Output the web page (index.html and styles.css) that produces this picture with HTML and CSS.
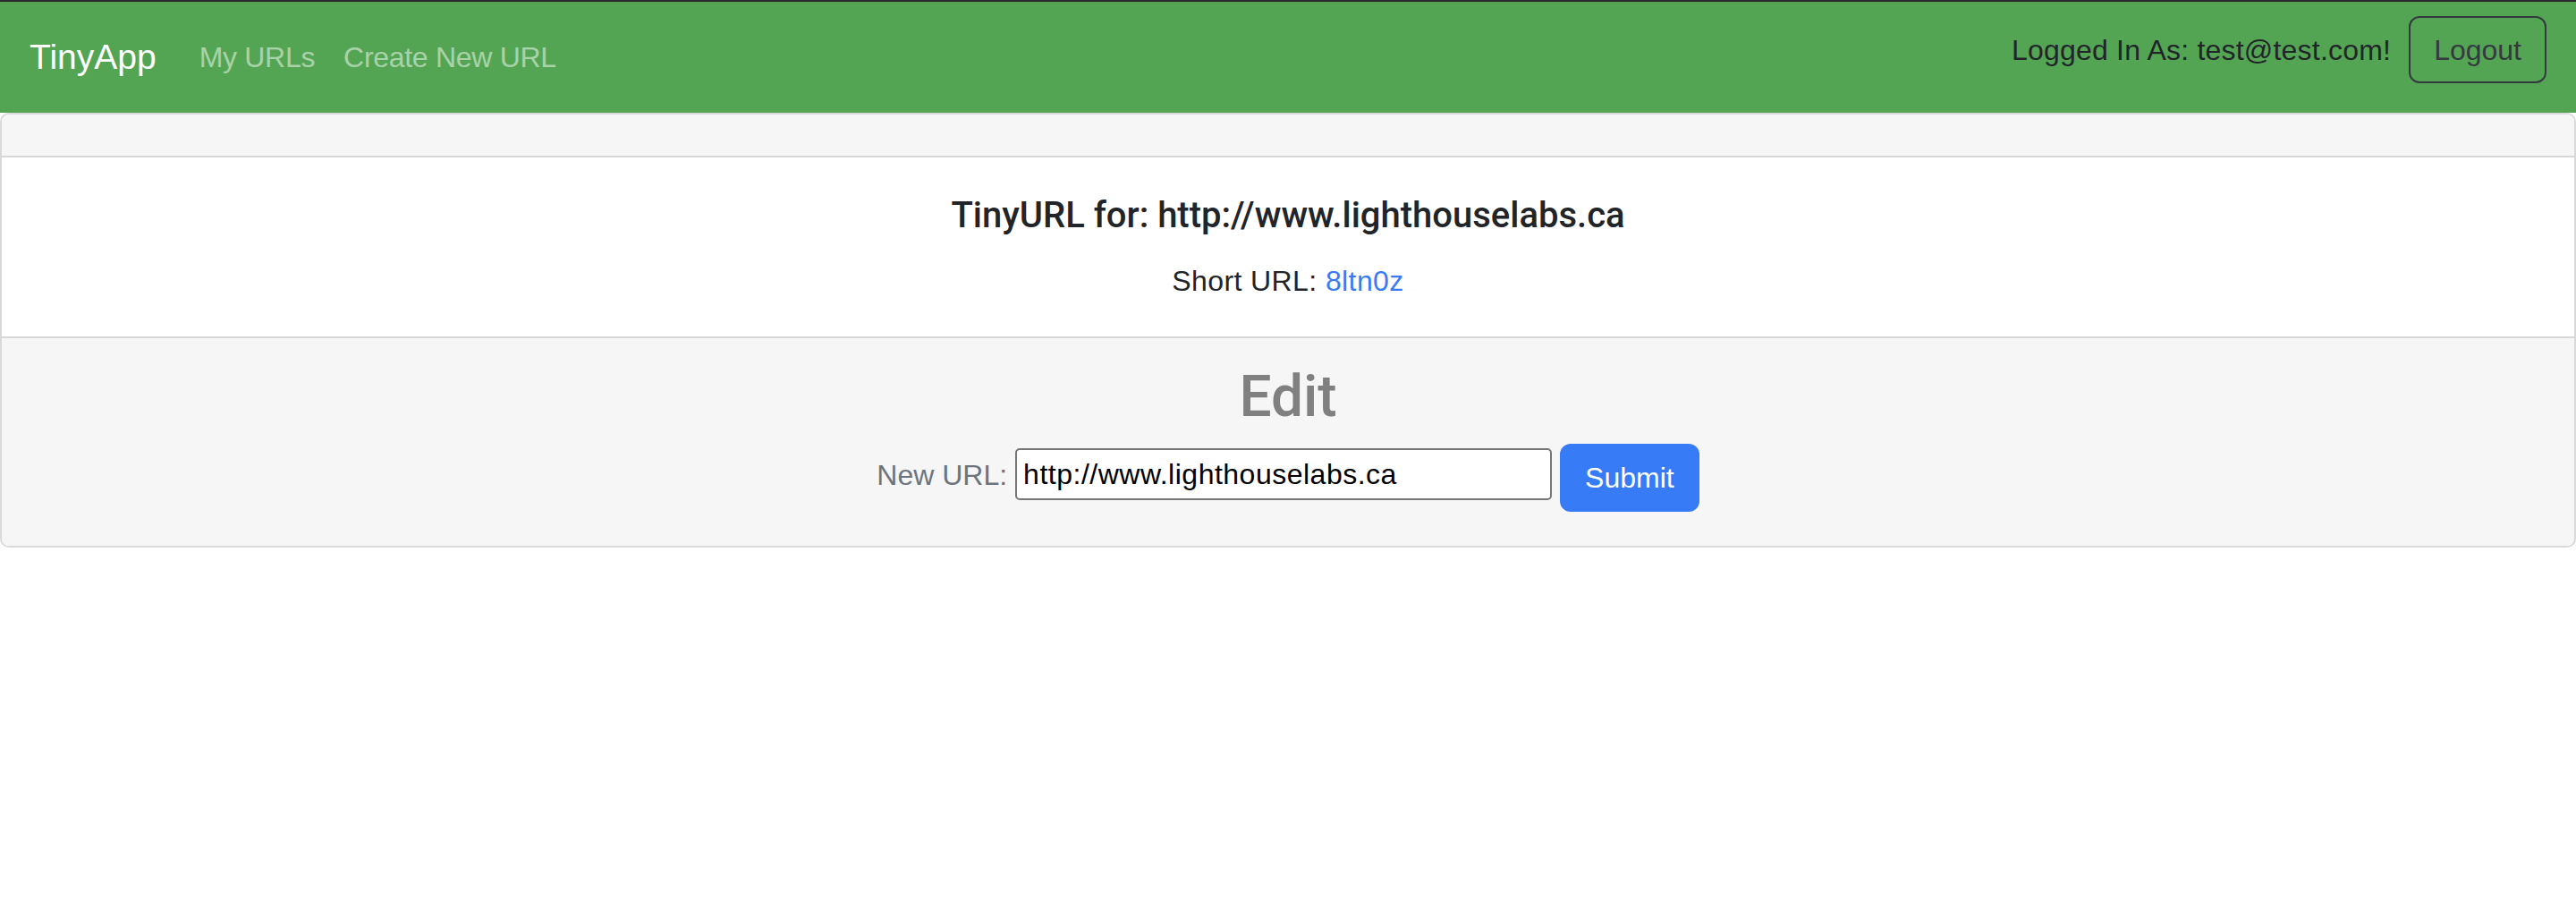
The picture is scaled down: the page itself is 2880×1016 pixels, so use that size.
FILE: index.html
```html
<!DOCTYPE html>
<html lang="en">
<head>
<meta charset="utf-8">
<title>TinyApp</title>
<link rel="stylesheet" href="styles.css">
</head>
<body>
<nav class="navbar">
  <div class="nav-left">
    <a class="brand" href="#">TinyApp</a>
    <a class="nav-link" href="#">My URLs</a>
    <a class="nav-link" href="#">Create New URL</a>
  </div>
  <form class="nav-right">
    <span class="user">Logged In As: test@test.com!</span>
    <button type="button" class="btn-logout">Logout</button>
  </form>
</nav>
<main class="card">
  <div class="card-header"></div>
  <div class="card-body">
    <h5 class="card-title">TinyURL for: http://www.lighthouselabs.ca</h5>
    <p class="card-text">Short URL: <a class="short-link" href="#">8ltn0z</a></p>
  </div>
  <div class="card-footer">
    <h2 class="edit-title">Edit</h2>
    <form class="edit-form">
      <label class="edit-label" for="longURL">New URL:</label>
      <input id="longURL" class="edit-input" type="text" value="http://www.lighthouselabs.ca">
      <button type="button" class="btn-submit">Submit</button>
    </form>
  </div>
</main>
</body>
</html>
```
FILE: styles.css
```css
* { box-sizing: border-box; }

html, body {
  margin: 0;
  padding: 0;
  background: #ffffff;
}

body {
  font-family: "Liberation Sans", Arial, sans-serif;
  font-size: 32px;
  line-height: 48px;
  color: #212529;
}

.navbar {
  display: flex;
  justify-content: space-between;
  align-items: center;
  height: 126px;
  border-top: 2px solid #2a2a2a;
  background: #54a553;
  padding: 0 33px;
}

.nav-left {
  display: flex;
  align-items: center;
}

.brand {
  font-size: 39px;
  line-height: 60px;
  color: #ffffff;
  text-decoration: none;
  margin-right: 32px;
}

.nav-link {
  font-size: 32px;
  line-height: 48px;
  padding: 0 16px;
  letter-spacing: -0.3px;
  color: rgba(255, 255, 255, 0.5);
  text-decoration: none;
}

.nav-right {
  display: flex;
  align-items: center;
  align-self: flex-start;
  margin: 16px 0 0 0;
  gap: 20px;
}

.user {
  color: #212529;
  font-size: 32px;
  line-height: 48px;
  letter-spacing: 0.2px;
}

.btn-logout {
  font-family: "Liberation Sans", Arial, sans-serif;
  font-size: 32px;
  line-height: 48px;
  height: 75px;
  padding: 0 26px;
  border: 2px solid #343a40;
  border-radius: 12px;
  background: transparent;
  color: #343a40;
}

.card {
  display: block;
  border: 2px solid #d9d9d9;
  border-radius: 10px;
  overflow: hidden;
}

.card-header {
  height: 48px;
  background: #f6f6f6;
  border-bottom: 2px solid #d6d6d6;
}

.card-body {
  background: #ffffff;
  text-align: center;
  padding: 41px 32px 38px;
}

.card-title {
  margin: 0 0 25px;
  font-family: Roboto, "Liberation Sans", sans-serif;
  font-weight: 500;
  font-size: 40px;
  line-height: 48px;
  color: #212529;
}

.card-text {
  margin: 0;
  font-size: 32px;
  line-height: 48px;
  letter-spacing: 0.4px;
}

.short-link {
  color: #3a7bf5;
  text-decoration: none;
}

.card-footer {
  background: #f6f6f6;
  border-top: 2px solid #d6d6d6;
  padding: 27px 32px 38px;
  text-align: center;
}

.edit-title {
  margin: 0 0 14px;
  font-family: Roboto, "Liberation Sans", sans-serif;
  font-weight: 500;
  font-size: 64px;
  line-height: 77px;
  color: #808080;
}

.edit-form {
  display: flex;
  justify-content: center;
  align-items: center;
  gap: 9px;
  height: 76px;
}

.edit-label {
  color: #6c757d;
  font-size: 32px;
  line-height: 48px;
  margin-bottom: 6px;
}

.edit-input {
  width: 600px;
  height: 58px;
  margin-bottom: 8px;
  border: 2px solid #767676;
  border-radius: 5px;
  padding: 0 7px;
  font-family: "Liberation Sans", Arial, sans-serif;
  font-size: 32px;
  letter-spacing: 0.5px;
  color: #000000;
  background: #ffffff;
}

.btn-submit {
  height: 76px;
  padding: 0 28px;
  border: none;
  border-radius: 12px;
  background: #377bf6;
  color: #ffffff;
  font-family: "Liberation Sans", Arial, sans-serif;
  font-size: 32px;
  line-height: 48px;
}
```
